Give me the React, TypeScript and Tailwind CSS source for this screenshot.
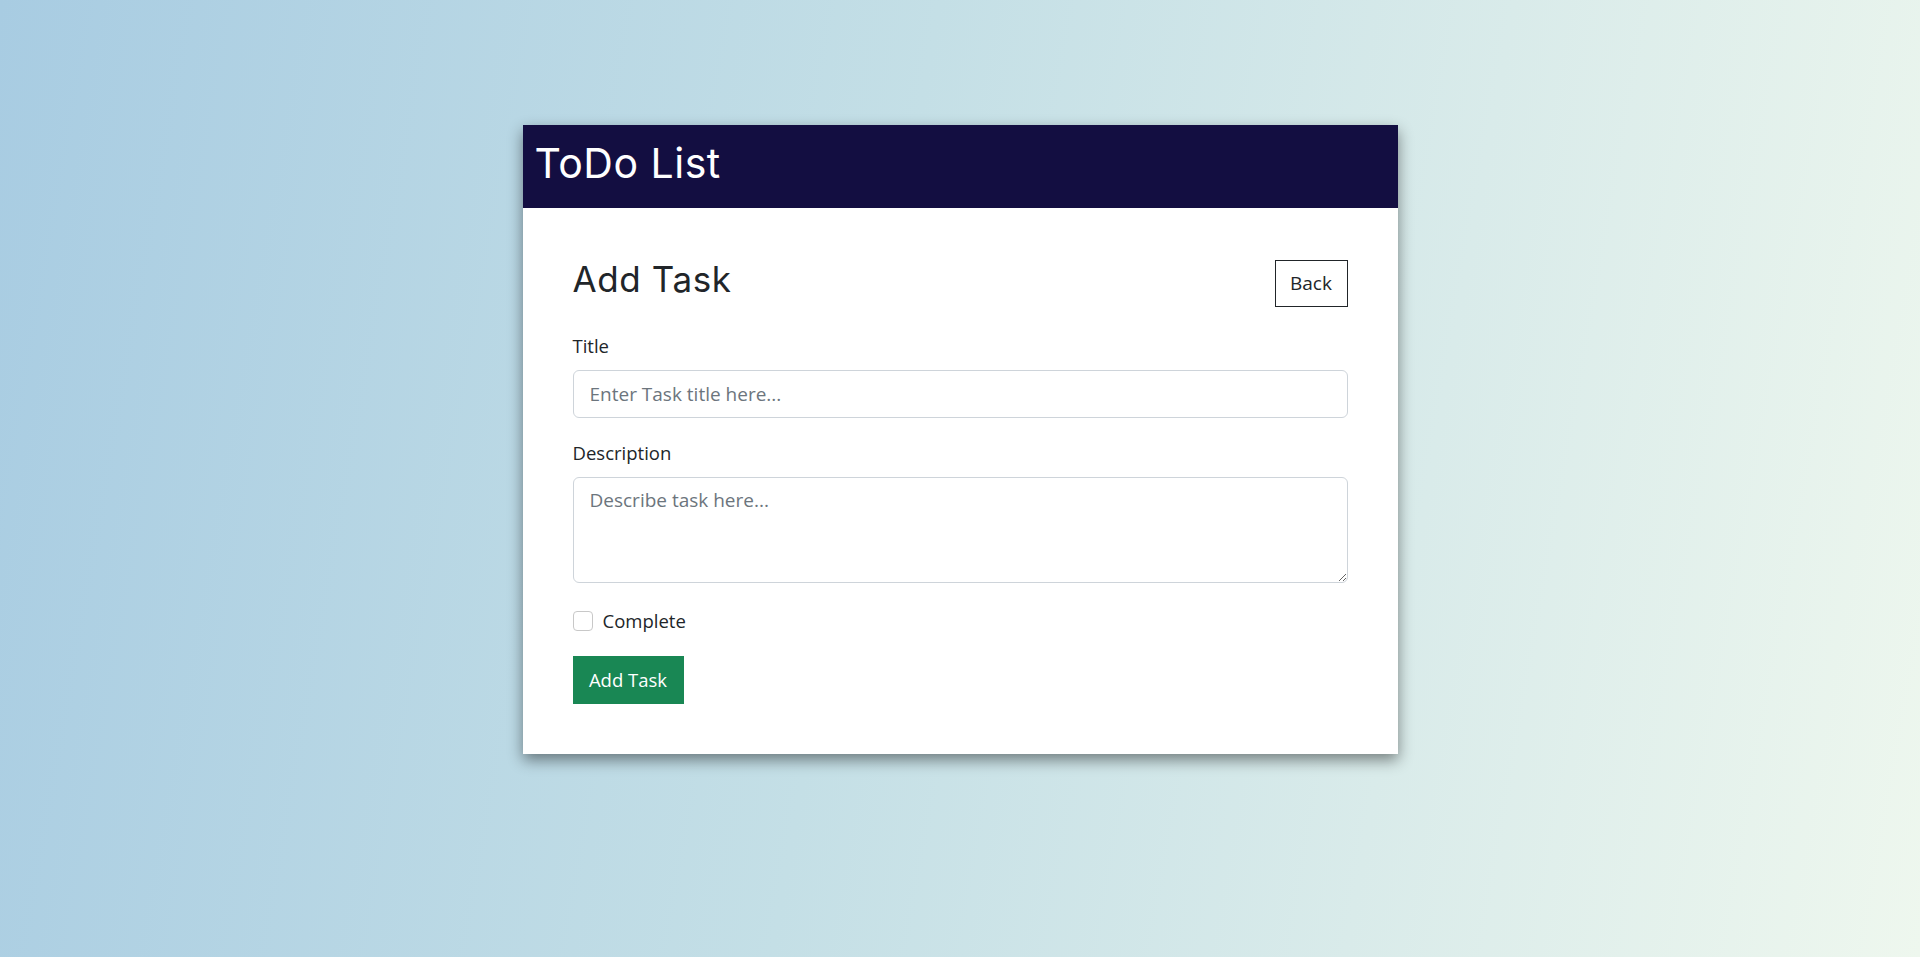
export default function App() {
  return (
    <div className="min-h-screen bg-[linear-gradient(100deg,#a8cce2_0%,#c4dfe6_45%,#eef7ee_100%)] pt-[125px] font-['Open_Sans',sans-serif] text-[#212529]">
      <div className="mx-auto w-[875px] bg-white shadow-[0_6px_14px_rgba(0,0,0,0.45)]">
        {/* Header */}
        <div className="flex h-[83px] items-center bg-[#130e41] px-3 pb-[7px]">
          <h1 className="font-['Inter',sans-serif] text-[41px] leading-none tracking-[0.5px] text-white">
            ToDo List
          </h1>
        </div>

        {/* Form */}
        <div className="px-[50px] pt-[52px] pb-[50px]">
          <div className="mb-[25px] flex items-start justify-between">
            <h2 className="mt-[-2px] font-['Inter',sans-serif] text-[35px] leading-[1.2] tracking-[0.6px] text-[#212529]">
              Add Task
            </h2>
            <button className="h-[47px] w-[73px] border border-[#212529] text-[19px] text-[#212529]">
              Back
            </button>
          </div>

          <label className="mb-[11px] block text-[18.5px] leading-[27px]">Title</label>
          <input
            type="text"
            placeholder="Enter Task title here..."
            className="block h-[48px] w-full rounded-md border border-[#ced4da] px-4 text-[19px] placeholder:text-[#6c757d] outline-none"
          />

          <label className="mt-[21px] mb-[11px] block text-[18.5px] leading-[27px]">
            Description
          </label>
          <textarea
            placeholder="Describe task here..."
            className="block h-[106px] w-full rounded-md border border-[#ced4da] px-4 py-2 text-[19px] placeholder:text-[#6c757d] outline-none"
          />

          <label className="mt-[24px] flex items-center gap-[10px] text-[18.5px] leading-[27px]">
            <span className="inline-block h-[20px] w-[20px] rounded-[4px] border border-[#c8c8c8] bg-white" />
            Complete
          </label>

          <button className="mt-[22px] h-[48px] w-[111px] bg-[#198754] text-[18.5px] text-white">
            Add Task
          </button>
        </div>
      </div>
    </div>
  );
}
